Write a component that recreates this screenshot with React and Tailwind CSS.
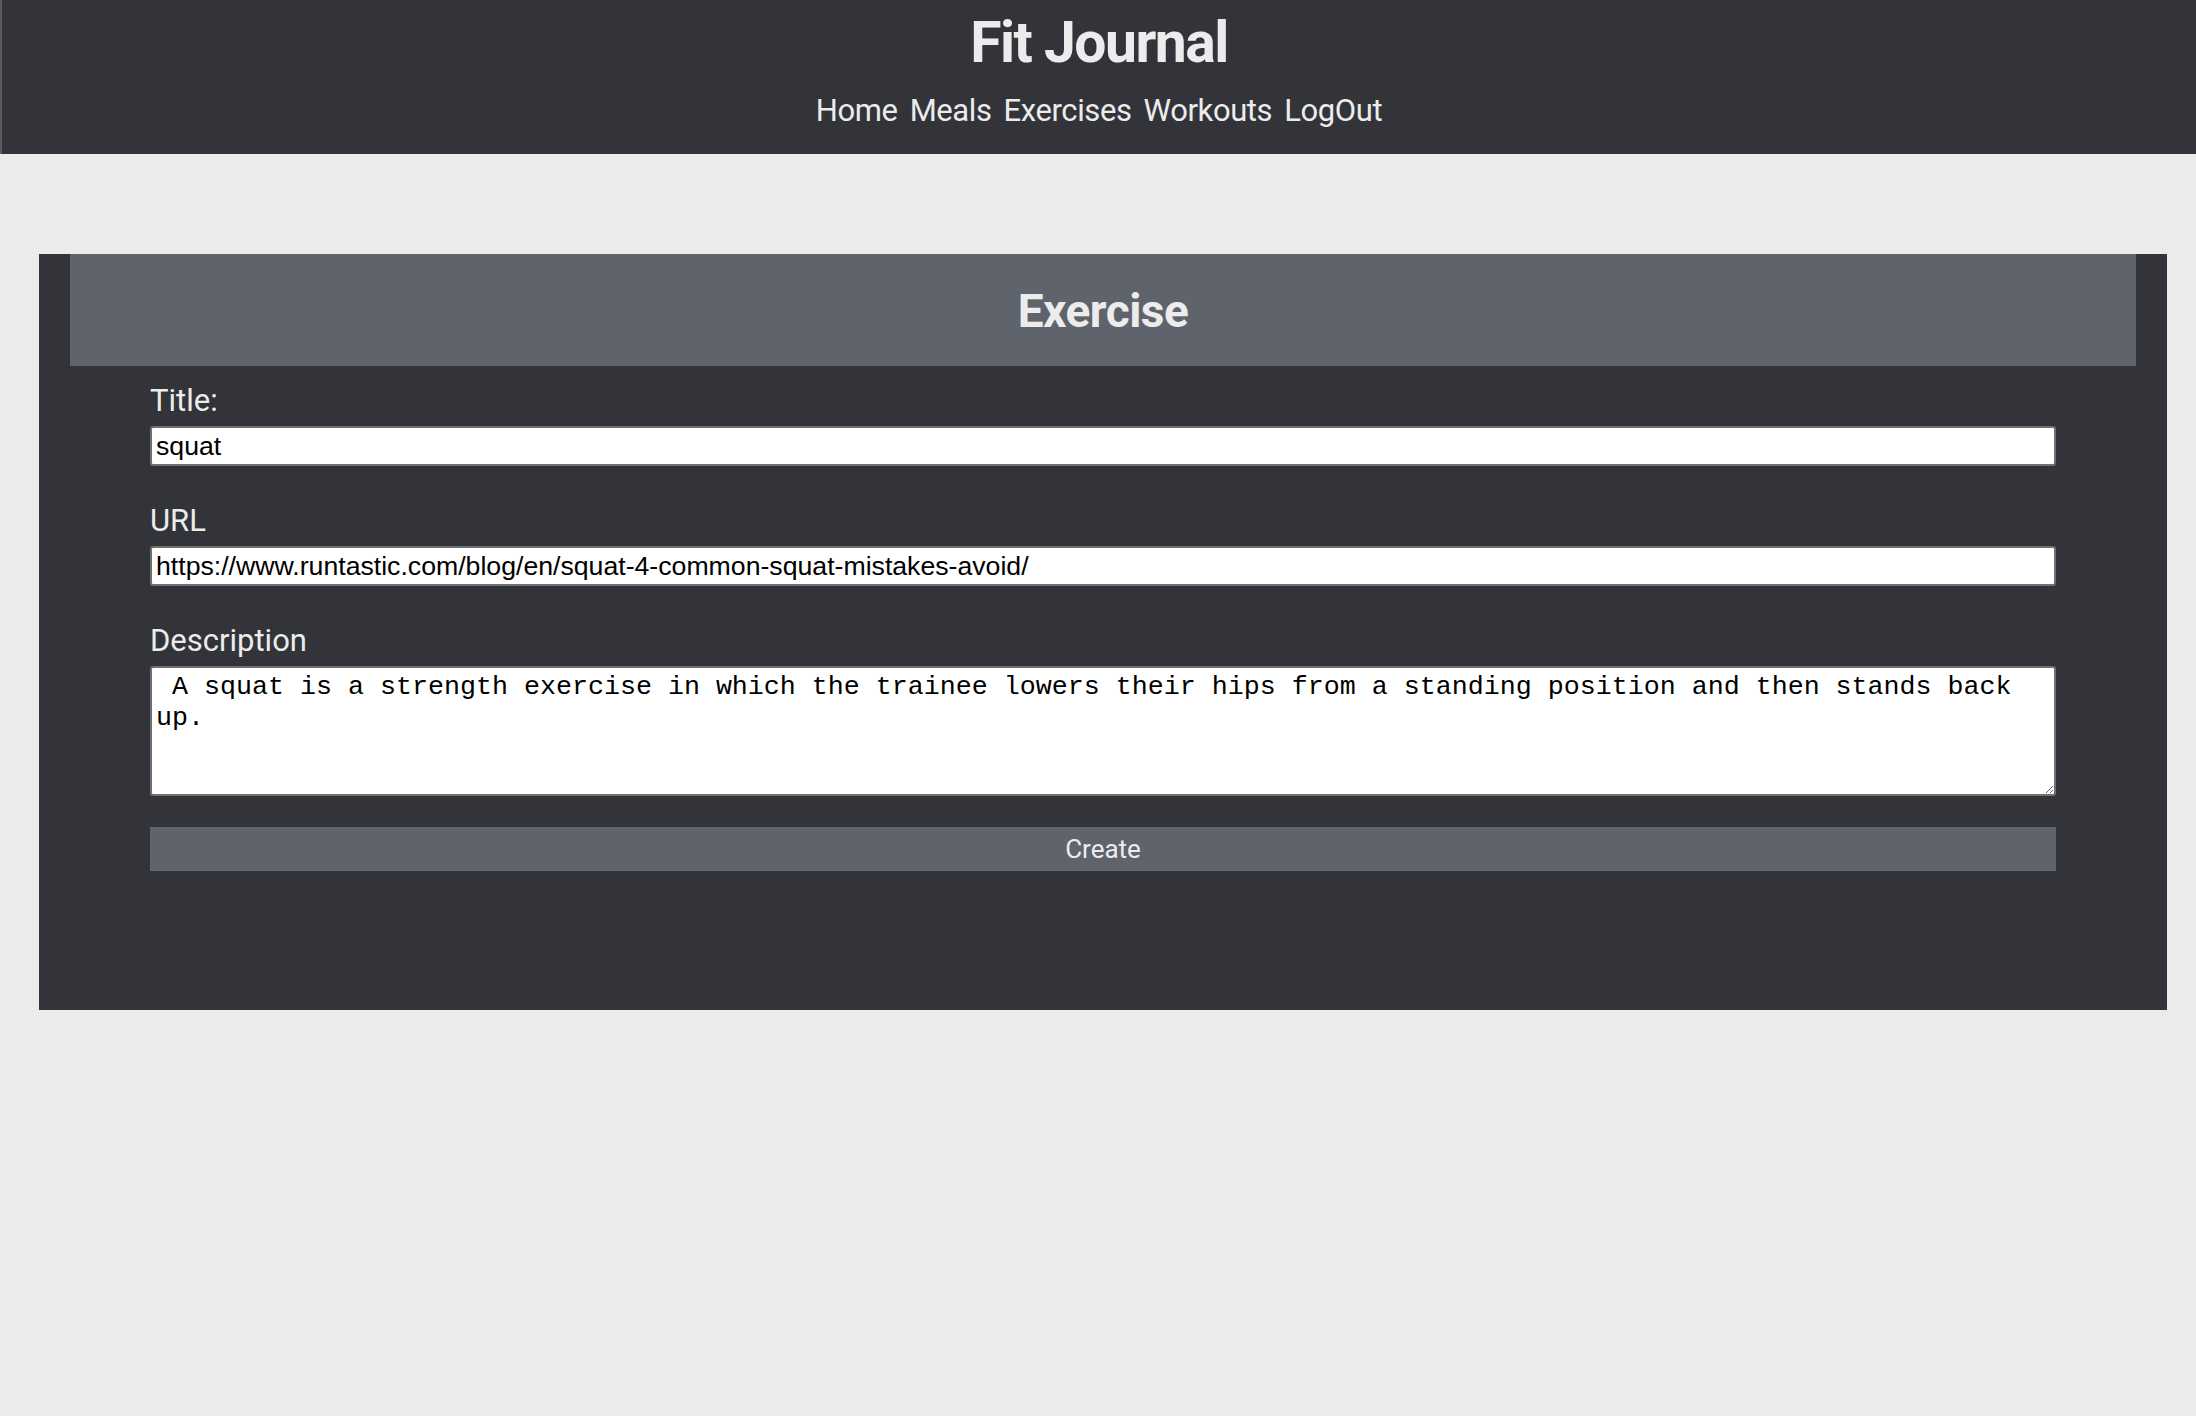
import React from "react";

const links = ["Home", "Meals", "Exercises", "Workouts", "LogOut"];

function Field({ label, children }) {
    return (
        <div className="mb-[37px]">
            <label className="block h-[36px] leading-[36px] text-[31px] text-[#ececec] mb-[7px]">{label}</label>
            {children}
        </div>
    );
}

export default function App() {
    return (
        <div className="min-h-screen bg-[#ebebeb] font-['Roboto',sans-serif]">
            <header className="h-[154px] bg-[#333439] border-l-2 border-[#58595d] flex flex-col items-center text-[#ececec]">
                <h1 className="text-[57px] font-bold leading-none tracking-[-1.5px] mt-[14px]">Fit Journal</h1>
                <nav className="flex gap-[12px] text-[31px] leading-none mt-[24px] tracking-[-0.4px]">
                    {links.map((l) => (
                        <a key={l} href="#" className="text-[#ececec]">{l}</a>
                    ))}
                </nav>
            </header>

            <main className="pt-[100px] pl-[39px]">
                <section className="w-[2128px] h-[756px] bg-[#333439] px-[31px]">
                    <div className="h-[112px] bg-[#5f636b] flex items-center justify-center">
                        <h2 className="text-[46px] font-bold text-[#ececec] tracking-[-0.5px] mt-[2px]">Exercise</h2>
                    </div>

                    <form className="px-[80px] pt-[17px]" onSubmit={(e) => e.preventDefault()}>
                        <Field label="Title:">
                            <input
                                defaultValue="squat"
                                className="block w-full h-[40px] bg-white border-2 border-[#707070] rounded-[3px] px-[4px] text-[26.67px] text-black font-['Liberation_Sans',Arial,sans-serif] outline-none"
                            />
                        </Field>
                        <Field label="URL">
                            <input
                                defaultValue="https://www.runtastic.com/blog/en/squat-4-common-squat-mistakes-avoid/"
                                className="block w-full h-[40px] bg-white border-2 border-[#707070] rounded-[3px] px-[4px] text-[26.67px] text-black font-['Liberation_Sans',Arial,sans-serif] outline-none"
                            />
                        </Field>
                        <div className="mb-[31px]">
                            <label className="block h-[36px] leading-[36px] text-[31px] text-[#ececec] mb-[7px]">Description</label>
                            <textarea
                                defaultValue=" A squat is a strength exercise in which the trainee lowers their hips from a standing position and then stands back up."
                                className="block w-full h-[130px] bg-white border-2 border-[#707070] rounded-[3px] p-[4px] text-[26.67px] leading-[31px] text-black font-['Liberation_Mono',monospace] outline-none resize-y"
                            />
                        </div>
                        <button
                            type="submit"
                            className="block w-full h-[44px] bg-[#5f636b] text-[#ececec] text-[26px] leading-none"
                        >
                            Create
                        </button>
                    </form>
                </section>
            </main>
        </div>
    );
}
